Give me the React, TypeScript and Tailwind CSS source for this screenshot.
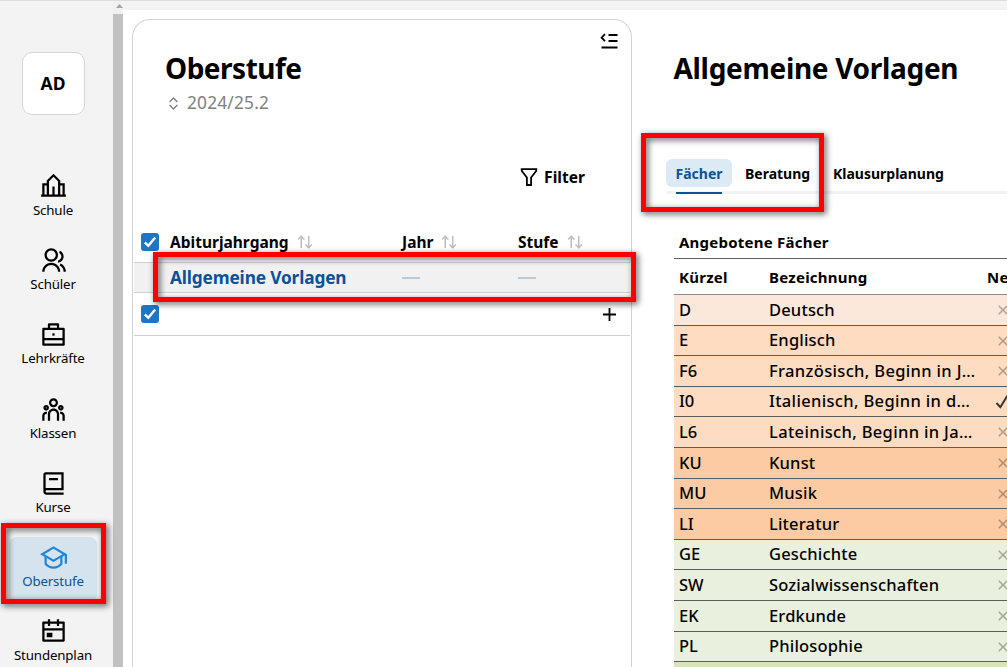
import React from "react";
import {
  RiGroupLine,
  RiTeamLine,
  RiGraduationCapLine,
  RiCalendarEventLine,
  RiArrowUpDownLine,
  RiExpandUpDownLine,
  RiCloseLine,
} from "react-icons/ri";

const SchoolIcon = () => (
  <svg viewBox="0 0 24 24" fill="currentColor" fillRule="evenodd" className="size-[27px]">
    <path d="M23 19H22V9H18V6.586L12 .586 6 6.586V9H2V19H1V21H23V19ZM6 19H4V11H6V19ZM18 11H20V19H18V11ZM8 7.414 12 3.414 16 7.414V19H13V12H11V19H8Z" />
  </svg>
);

const BriefcaseIcon = () => (
  <svg viewBox="0 0 24 24" fill="none" stroke="currentColor" strokeWidth="2" className="size-[27px]">
    <path d="M3 7H21V21H3ZM8 7V3H16V7M3 16H21" strokeLinejoin="round" />
    <path d="M11 12H13" />
  </svg>
);

const BookIcon = () => (
  <svg viewBox="0 0 24 24" fill="currentColor" className="size-[27px]">
    <path d="M21 18H6C5.44772 18 5 18.4477 5 19C5 19.5523 5.44772 20 6 20H21V22H6C4.34315 22 3 20.6569 3 19V4C3 2.89543 3.89543 2 5 2H21V18ZM5 16.05C5.16156 16.0172 5.32877 16 5.5 16H19V4H5V16.05ZM16 9H8V7H16V9Z" />
  </svg>
);

const navItems = [
  { label: "Schule", icon: <SchoolIcon /> },
  { label: "Schüler", icon: <RiGroupLine size={27} /> },
  { label: "Lehrkräfte", icon: <BriefcaseIcon /> },
  { label: "Klassen", icon: <RiTeamLine size={27} /> },
  { label: "Kurse", icon: <BookIcon /> },
  { label: "Oberstufe", icon: <RiGraduationCapLine size={27} />, active: true },
  { label: "Stundenplan", icon: <RiCalendarEventLine size={27} /> },
];

const subjects = [
  { code: "D", name: "Deutsch", style: "h-[31px] bg-[#fce8da]" },
  { code: "E", name: "Englisch", style: "h-[30px] bg-[#fddcc2]" },
  { code: "F6", name: "Französisch, Beginn in J…", style: "h-[31px] bg-[#fddcc2]", long: true },
  { code: "I0", name: "Italienisch, Beginn in d…", style: "h-[30px] bg-[#fddcc2]", long: true, on: true },
  { code: "L6", name: "Lateinisch, Beginn in Ja…", style: "h-[31px] bg-[#fddcc2]", long: true },
  { code: "KU", name: "Kunst", style: "h-[31px] bg-[#fccba4]" },
  { code: "MU", name: "Musik", style: "h-[30px] bg-[#fccba4]" },
  { code: "LI", name: "Literatur", style: "h-[31px] bg-[#fccba4]" },
  { code: "GE", name: "Geschichte", style: "h-[30px] bg-[#eaf0de]" },
  { code: "SW", name: "Sozialwissenschaften", style: "h-[31px] bg-[#eaf0de]" },
  { code: "EK", name: "Erdkunde", style: "h-[31px] bg-[#eaf0de]" },
  { code: "PL", name: "Philosophie", style: "h-[30px] bg-[#eaf0de]" },
];

function Checkbox() {
  return (
    <span className="flex size-[18px] shrink-0 items-center justify-center rounded-[3px] bg-[#1c76c5] text-white">
      <svg viewBox="0 0 18 18" fill="none" stroke="currentColor" strokeWidth="2.4" className="size-[18px]">
        <path d="M3.8 9.4 7.3 12.8 14.2 4.6" />
      </svg>
    </span>
  );
}

function SortHeader({ label, className }: { label: string; className: string }) {
  return (
    <div className={`flex items-center ${className}`}>
      <span>{label}</span>
      <RiArrowUpDownLine size={18} className="-mt-0.5 ml-[7px] shrink-0 text-[#bdbdbd]" />
    </div>
  );
}

function Sidebar() {
  return (
    <nav className="flex w-[113px] shrink-0 flex-col items-center pr-[7px]">
      <div className="mt-[51px] flex size-[63px] shrink-0 items-center justify-center rounded-[10px] border border-[#d6d6d6] bg-white text-[17.5px] font-bold">
        AD
      </div>
      <div className="mt-[51px] flex flex-col">
        {navItems.map((item) => (
          <div
            key={item.label}
            className={`mb-[8.2px] flex h-[66px] w-[88px] shrink-0 flex-col items-center rounded-lg pt-[7px] ${
              item.active ? "bg-[#d5e3ee] text-[#1f86d8]" : ""
            }`}
          >
            {item.icon}
            <span
              className={`text-[13.3px] leading-[20px] tracking-[-0.15px] ${item.active ? "text-[#0b5296]" : ""}`}
            >
              {item.label}
            </span>
          </div>
        ))}
      </div>
    </nav>
  );
}

function Scrollbar() {
  return (
    <div className="flex w-[10px] shrink-0 flex-col items-center bg-[#f1f1f1]">
      <svg viewBox="0 0 10 13" className="h-[13px] w-[10px] shrink-0" fill="#a3a3a3">
        <path d="M3 7 6.5 3 10 7Z" />
      </svg>
      <div className="w-full grow bg-[#c1c1c1]" />
    </div>
  );
}

function YearList() {
  return (
    <section className="ml-[9px] mt-[9px] flex w-[500px] shrink-0 flex-col rounded-t-[18px] border border-b-0 border-[#d3d3d3] bg-white">
      <div className="flex h-[206px] shrink-0 justify-between pl-8 pr-[13px]">
        <div className="pt-[29px]">
          <h1 className="text-[28px] font-bold leading-[38px] tracking-[-0.5px]">Oberstufe</h1>
          <div className="mt-[2px] flex items-center text-[17.3px] leading-[28px] tracking-[0.2px] text-[#808080]">
            <RiExpandUpDownLine size={17} className="mr-[5px]" />
            2024/25.2
          </div>
        </div>
        <div className="flex flex-col items-end">
          <svg viewBox="0 0 18 16" fill="none" stroke="black" strokeWidth="1.8" className="mt-[13px] h-4 w-[18px]">
            <path d="M5 1.2 1.6 4.7 5 8.2M8.5 2H17.5M8.5 8H17.5M1.5 14.5H17.5" />
          </svg>
          <div className="mr-[33px] mt-[118px] flex items-center text-[15.6px] font-bold leading-5">
            <svg viewBox="0 0 18 18" fill="none" stroke="black" strokeWidth="1.8" className="mr-[6px] size-[18px]">
              <path d="M0.8 1.2H17.2M1.8 1.2V3L6.9 9.5V17H11.1V9.5L16.2 3V1.2" />
            </svg>
            Filter
          </div>
        </div>
      </div>
      <div className="flex h-9 shrink-0 items-center pb-[3px] pl-2 text-[15.5px] font-bold">
        <span className="-mt-px"><Checkbox /></span>
        <SortHeader label="Abiturjahrgang" className="ml-[11px] w-[232px]" />
        <SortHeader label="Jahr" className="w-[116px]" />
        <SortHeader label="Stufe" className="w-[100px]" />
      </div>
      <div className="mx-px flex h-[31px] shrink-0 items-center border-y border-[#d0d0d0] bg-[#f1f1f1] pl-9 text-[17.3px] font-bold text-[#0b5296]">
        <span className="w-[232px] tracking-[-0.15px]">Allgemeine Vorlagen</span>
        <span className="w-[116px]">
          <span className="block h-0.5 w-[18px] bg-[#b4cbde]" />
        </span>
        <span className="block h-0.5 w-[18px] bg-[#b4cbde]" />
      </div>
      <div className="mx-px flex h-[43px] shrink-0 items-center justify-between border-b border-[#d0d0d0] pl-[7px] pr-[14px]">
        <Checkbox />
        <svg viewBox="0 0 13 13" stroke="black" strokeWidth="1.8" className="size-[13px]">
          <path d="M6.5 0V13M0 6.5H13" />
        </svg>
      </div>
    </section>
  );
}

function Details() {
  return (
    <section className="ml-[34px] flex w-[420px] shrink-0 flex-col">
      <h2 className="ml-[7.5px] mt-[39px] text-[28px] font-bold leading-[38px] tracking-[-0.3px]">Allgemeine Vorlagen</h2>
      <div className="mt-[72px] flex h-[28px] shrink-0 items-center text-[14px] font-bold">
        <span className="flex h-[28px] w-[66px] items-center justify-center rounded-md bg-[#dceaf6] text-[#0b5296]">
          Fächer
        </span>
        <span className="ml-[13px] w-[88px]">Beratung</span>
        <span>Klausurplanung</span>
      </div>
      <div className="mt-1 flex h-[3px] shrink-0 rounded-full bg-[#f3f3f3] pl-[10px]">
        <div className="mt-px h-0.5 w-[46px] bg-[#0b5296]" />
      </div>
      <div className="ml-2 mt-[34px] flex flex-col">
        <div className="flex h-[31px] items-center border-b border-[#5c5c5c] pb-[2px] pl-[5px] text-[15px] font-bold tracking-[0.23px]">
          Angebotene Fächer
        </div>
        <div className="flex h-9 items-center border-b border-[#8f8f8f] pl-[5px] pt-px text-[15px] font-bold tracking-[0.25px]">
          <span className="w-[90px]">Kürzel</span>
          <span className="w-[218px]">Bezeichnung</span>
          <span>Neu</span>
        </div>
        {subjects.map((s) => (
          <div
            key={s.code}
            className={`flex shrink-0 items-center border-b border-[#5c5c5c] pl-[5px] text-[16.5px] font-medium ${s.style}`}
          >
            <span className="w-[90px]">{s.code}</span>
            <span
              className={`w-[225px] whitespace-nowrap ${s.long ? "tracking-[0.34px]" : "tracking-[0.17px]"}`}
            >
              {s.name}
            </span>
            {s.on ? (
              <svg viewBox="0 0 18 18" fill="none" stroke="#333" strokeWidth="1.9" className="size-[18px]">
                <path d="M2.5 10 6.3 14.2 13.5 2.5" />
              </svg>
            ) : (
              <RiCloseLine size={18} className="text-black/30" />
            )}
          </div>
        ))}
        <div className="h-[6px] bg-[#d8e4bc]" />
      </div>
    </section>
  );
}

export default function App() {
  return (
    <div className="relative flex h-[667px] w-[1007px] flex-col overflow-hidden border-t border-[#dedede] bg-[#f3f3f3] font-['Noto_Sans',sans-serif] text-black">
      <div className="flex min-h-0 grow">
        <Sidebar />
        <Scrollbar />
        <main className="mt-[9px] flex min-w-0 grow overflow-hidden bg-white">
          <YearList />
          <Details />
        </main>
      </div>
      <div className="absolute left-[1px] top-[522px] h-[81px] w-[105px] border-5 border-[#fe0000] drop-shadow-[2px_2px_3px_rgba(0,0,0,0.65)]" />
      <div className="absolute left-[153px] top-[251px] h-[50px] w-[483px] border-5 border-[#fe0000] drop-shadow-[2px_2px_3px_rgba(0,0,0,0.65)]" />
      <div className="absolute left-[641px] top-[132px] h-[79px] w-[183px] border-5 border-[#fe0000] drop-shadow-[2px_2px_3px_rgba(0,0,0,0.65)]" />
    </div>
  );
}
